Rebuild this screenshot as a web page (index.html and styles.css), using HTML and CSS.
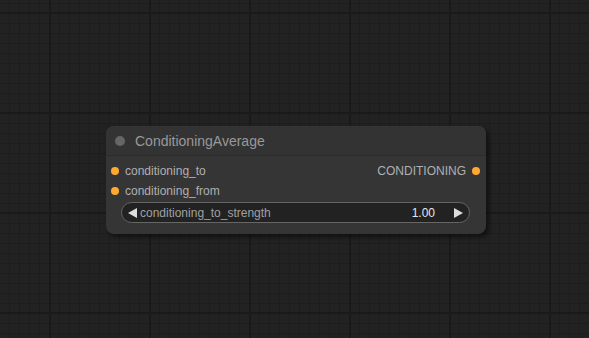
FILE: index.html
```html
<!DOCTYPE html>
<html lang="en">
<head>
    <meta charset="UTF-8">
    <title>ConditioningAverage</title>
    <link rel="stylesheet" href="styles.css">
</head>
<body>
    <div class="canvas">
        <div class="node">
            <div class="node-title">
                <span class="title-dot"></span>
                <span class="title-text">ConditioningAverage</span>
            </div>
            <div class="node-body">
                <div class="slot-row">
                    <div class="slot-in"><span class="dot"></span>conditioning_to</div>
                    <div class="slot-out">CONDITIONING<span class="dot"></span></div>
                </div>
                <div class="slot-row">
                    <div class="slot-in"><span class="dot"></span>conditioning_from</div>
                </div>
                <div class="widget">
                    <svg class="arrow" width="10" height="10" viewBox="0 0 10 10"><polygon points="9,0 9,10 0,5" fill="#ddd"/></svg>
                    <span class="widget-label">conditioning_to_strength</span>
                    <span class="widget-value">1.00</span>
                    <svg class="arrow" width="10" height="10" viewBox="0 0 10 10"><polygon points="1,0 1,10 10,5" fill="#ddd"/></svg>
                </div>
            </div>
        </div>
    </div>
</body>
</html>
```

FILE: styles.css
```css
html, body {
    margin: 0;
    height: 100%;
}
body {
    font-family: "Liberation Sans", Arial, sans-serif;
    background-color: #222;
    background-image:
        linear-gradient(to right, #1a1a1a 2px, transparent 2px),
        linear-gradient(to bottom, #1a1a1a 2px, transparent 2px),
        linear-gradient(to right, #1d1d1d 1px, transparent 1px),
        linear-gradient(to bottom, #1d1d1d 1px, transparent 1px);
    background-size: 100px 100px, 100px 100px, 10px 10px, 10px 10px;
    background-position: 49px 12px, 49px 12px, 9px 3px, 9px 3px;
    overflow: hidden;
}
.canvas {
    position: relative;
    width: 589px;
    height: 338px;
}
.node {
    position: absolute;
    left: 106px;
    top: 126px;
    width: 380px;
    height: 108px;
    background: #353535;
    border-radius: 8px;
    box-shadow: 3px 3px 4px rgba(0, 0, 0, 0.5);
    display: flex;
    flex-direction: column;
    overflow: hidden;
}
.node-title {
    height: 30px;
    box-sizing: border-box;
    background: #333;
    border-bottom: 1px solid #2b2b2b;
    display: flex;
    align-items: center;
    padding-left: 9px;
    gap: 10px;
}
.title-dot {
    width: 10px;
    height: 10px;
    border-radius: 50%;
    background: #666;
    margin-top: 1px;
}
.title-text {
    color: #999;
    font-size: 14px;
}
.node-body {
    padding-top: 5px;
    display: flex;
    flex-direction: column;
}
.slot-row {
    height: 20px;
    display: flex;
    align-items: center;
    justify-content: space-between;
    font-size: 12px;
    color: #b0b0b0;
}
.slot-in {
    display: flex;
    align-items: center;
    gap: 6px;
    padding-left: 5px;
}
.slot-out {
    display: flex;
    align-items: center;
    gap: 6px;
    padding-right: 6px;
}
.dot {
    width: 8px;
    height: 8px;
    border-radius: 50%;
    background: #ffa931;
}
.widget {
    margin: 1px 16px 0 15px;
    height: 21px;
    box-sizing: border-box;
    background: #222;
    border: 1px solid #666;
    border-radius: 11px;
    display: flex;
    align-items: center;
    padding: 0 6px 0 6px;
    font-size: 12px;
}
.widget-label {
    color: #a0a0a0;
    margin-left: 2px;
    flex: 1;
}
.widget-value {
    color: #e6e6e6;
    margin-right: 18px;
}
```
